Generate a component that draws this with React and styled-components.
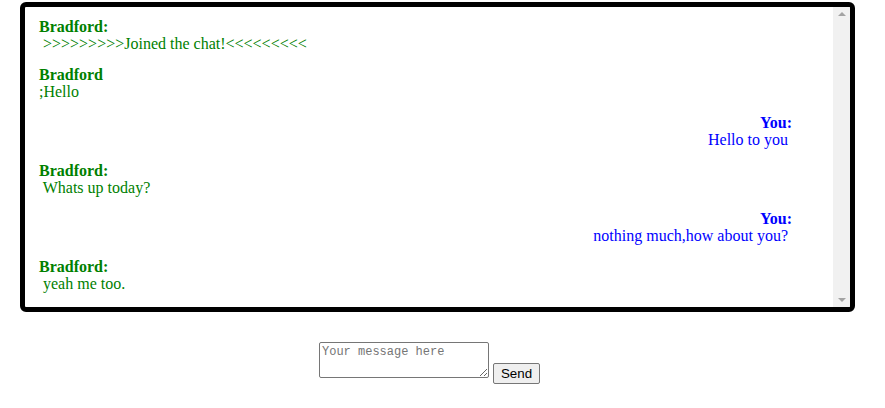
import React from 'react';
import styled, { createGlobalStyle } from 'styled-components';

const GlobalStyle = createGlobalStyle`
  body {
    margin: 0;
    background: #fff;
    font-family: "Liberation Serif", "Times New Roman", serif;
  }
`;

const Page = styled.div`
  padding: 2px 30px 0 20px;
`;

const ChatBox = styled.div`
  box-sizing: border-box;
  display: flex;
  height: 310px;
  border: 5px solid #000;
  border-radius: 6px;
  overflow: hidden;
`;

const MessageList = styled.div`
  flex: 1;
  padding: 11px 41px 0 14px;
  font-size: 16px;
  line-height: 17px;
`;

const ScrollTrack = styled.div`
  width: 17px;
  flex: none;
  background: #f1f1f1;
  display: flex;
  flex-direction: column;
  justify-content: space-between;
  align-items: center;
  padding: 5px 0;
  box-sizing: border-box;
`;

const Arrow = styled.div`
  width: 0;
  height: 0;
  border-left: 4px solid transparent;
  border-right: 4px solid transparent;
  ${props => (props.down
    ? 'border-top: 4px solid #a3a3a3;'
    : 'border-bottom: 4px solid #a3a3a3;')}
`;

const Message = styled.div`
  margin-bottom: 14px;
  text-align: ${props => (props.mine ? 'right' : 'left')};
  color: ${props => (props.mine ? '#0000ff' : '#008000')};
`;

const Name = styled.div`
  font-weight: bold;
`;

const Body = styled.div`
  white-space: pre;
`;

const Composer = styled.form`
  display: flex;
  justify-content: center;
  align-items: flex-start;
  gap: 4px;
  margin-top: 30px;
  padding-right: 16px;
`;

const MessageInput = styled.textarea`
  box-sizing: border-box;
  width: 170px;
  height: 36px;
  margin: 0;
  padding: 2px;
  border: 1px solid #767676;
  border-radius: 2px;
  font-family: "Liberation Mono", "DejaVu Sans Mono", monospace;
  font-size: 12px;
  &::placeholder {
    color: #757575;
  }
`;

const SendButton = styled.button`
  box-sizing: border-box;
  height: 21px;
  width: 47px;
  margin: 21px 0 0 0;
  padding: 1px 6px;
  border: 1px solid #767676;
  border-radius: 2px;
  background: #efefef;
  color: #000;
  font-family: "Liberation Sans", Arial, sans-serif;
  font-size: 13.33px;
`;

const messages = [
  { name: 'Bradford:', text: ' >>>>>>>>>Joined the chat!<<<<<<<<<' },
  { name: 'Bradford', text: ';Hello' },
  { name: 'You:', text: 'Hello to you ', mine: true },
  { name: 'Bradford:', text: ' Whats up today?' },
  { name: 'You:', text: 'nothing much,how about you? ', mine: true },
  { name: 'Bradford:', text: ' yeah me too.' },
];

export default function App() {
  return (
    <Page>
      <GlobalStyle />
      <ChatBox>
        <MessageList>
          {messages.map((m, i) => (
            <Message key={i} mine={m.mine}>
              <Name>{m.name}</Name>
              <Body>{m.text}</Body>
            </Message>
          ))}
        </MessageList>
        <ScrollTrack>
          <Arrow />
          <Arrow down />
        </ScrollTrack>
      </ChatBox>
      <Composer onSubmit={e => e.preventDefault()}>
        <MessageInput placeholder="Your message here" />
        <SendButton type="submit">Send</SendButton>
      </Composer>
    </Page>
  );
}
